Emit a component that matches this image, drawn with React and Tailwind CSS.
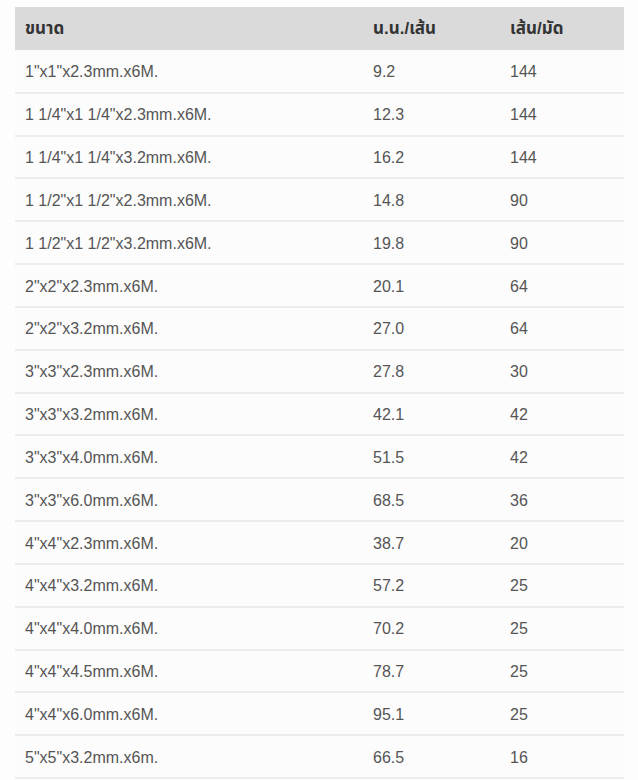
const rows = [
  ['1"x1"x2.3mm.x6M.', '9.2', '144'],
  ['1 1/4"x1 1/4"x2.3mm.x6M.', '12.3', '144'],
  ['1 1/4"x1 1/4"x3.2mm.x6M.', '16.2', '144'],
  ['1 1/2"x1 1/2"x2.3mm.x6M.', '14.8', '90'],
  ['1 1/2"x1 1/2"x3.2mm.x6M.', '19.8', '90'],
  ['2"x2"x2.3mm.x6M.', '20.1', '64'],
  ['2"x2"x3.2mm.x6M.', '27.0', '64'],
  ['3"x3"x2.3mm.x6M.', '27.8', '30'],
  ['3"x3"x3.2mm.x6M.', '42.1', '42'],
  ['3"x3"x4.0mm.x6M.', '51.5', '42'],
  ['3"x3"x6.0mm.x6M.', '68.5', '36'],
  ['4"x4"x2.3mm.x6M.', '38.7', '20'],
  ['4"x4"x3.2mm.x6M.', '57.2', '25'],
  ['4"x4"x4.0mm.x6M.', '70.2', '25'],
  ['4"x4"x4.5mm.x6M.', '78.7', '25'],
  ['4"x4"x6.0mm.x6M.', '95.1', '25'],
  ['5"x5"x3.2mm.x6m.', '66.5', '16'],
];

export default function App() {
  return (
    <div className="w-[638px] h-[780px] overflow-hidden bg-[#fdfdfd] pt-[7px] pl-[15px] font-['Liberation_Sans','Noto_Sans_Thai','Noto_Sans',sans-serif]">
      <table className="w-[609px] border-collapse table-fixed text-[16px]">
        <colgroup>
          <col className="w-[348px]" />
          <col className="w-[137px]" />
          <col className="w-[124px]" />
        </colgroup>
        <thead>
          <tr className="h-[43px] bg-[#dadada]">
            <th className="text-left font-bold text-[#333] text-[17px] pl-[10px] p-0 leading-[20px]">ขนาด</th>
            <th className="text-left font-bold text-[#333] text-[17px] pl-[10px] p-0 leading-[20px]">น.น./เส้น</th>
            <th className="text-left font-bold text-[#333] text-[17px] pl-[10px] p-0 leading-[20px]">เส้น/มัด</th>
          </tr>
        </thead>
        <tbody>
          {rows.map((r, i) => (
            <tr key={i} className="h-[42.84px] bg-[#fcfcfc] border-b-2 border-[#ececec]">
              <td className="pl-[10px] pt-[2px] pb-0 pr-0 text-[#555] leading-[20px]">{r[0]}</td>
              <td className="pl-[10px] pt-[2px] pb-0 pr-0 text-[#555] leading-[20px]">{r[1]}</td>
              <td className="pl-[10px] pt-[2px] pb-0 pr-0 text-[#555] leading-[20px]">{r[2]}</td>
            </tr>
          ))}
        </tbody>
      </table>
    </div>
  );
}
